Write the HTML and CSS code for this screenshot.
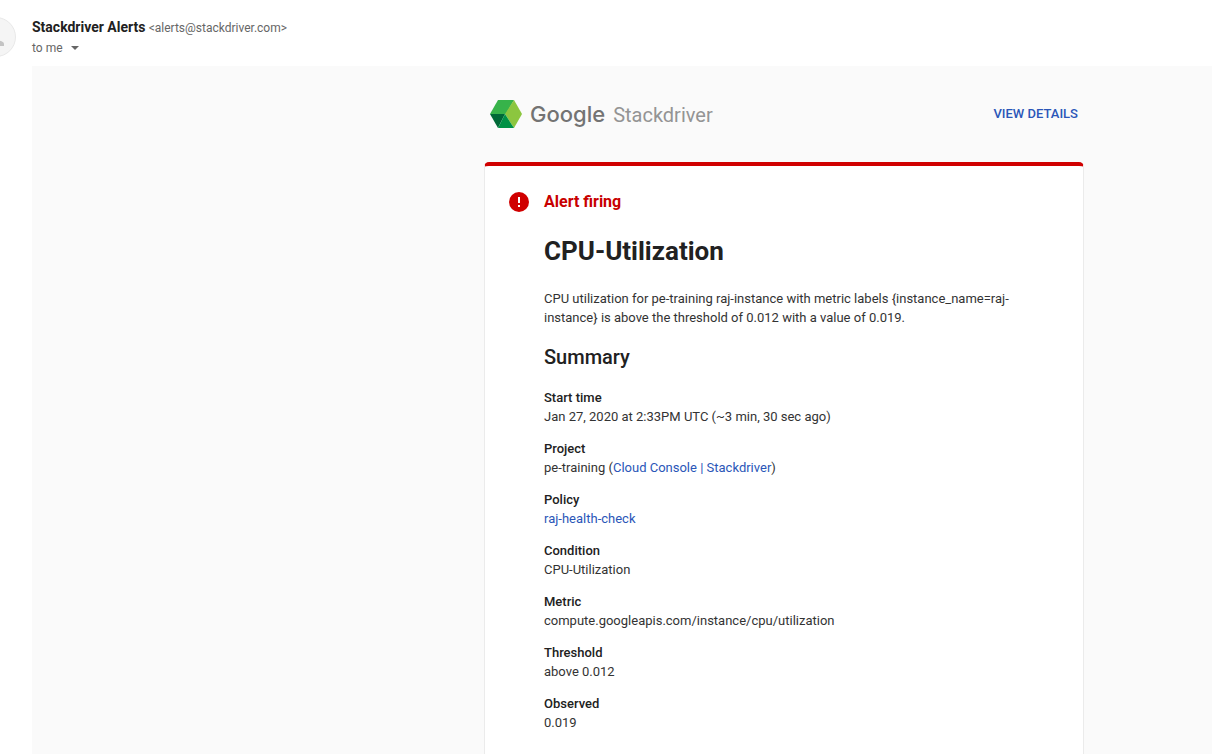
FILE: index.html
```html
<!DOCTYPE html>
<html lang="en">
<head>
<meta charset="utf-8">
<title>Stackdriver Alerts</title>
<link rel="stylesheet" href="styles.css">
</head>
<body>
<div class="mail">
  <header class="sender">
    <svg class="avatar" viewBox="0 0 40 40" aria-hidden="true">
      <circle cx="20" cy="20" r="19.500" fill="#f5f5f5" stroke="#e8e8e8"/>
      <circle cx="18" cy="15" r="5" fill="#c4c4c4"/>
      <path d="M9 29v-2c0-3 6-4 9-4s10 1 10 4v2z" fill="#c4c4c4"/>
    </svg>
    <div class="sender-lines">
      <div class="from"><span class="name">Stackdriver Alerts</span> <span class="address">&lt;alerts@stackdriver.com&gt;</span></div>
      <button class="recipient" type="button">to me
        <svg class="caret" viewBox="0 0 8 4" aria-hidden="true"><path d="M0 0h8L4 4z" fill="#666"/></svg>
      </button>
    </div>
  </header>
  <main class="message">
    <div class="letter">
      <div class="brand-bar">
        <div class="brand">
          <svg class="logo" viewBox="0 0 32 28" aria-hidden="true">
            <path d="M8 0h16l-8 14H0z" fill="#37b34a"/>
            <path d="M24 0l8 14-8 14-9-14z" fill="#8cc63f"/>
            <path d="M0 14h15L8 28z" fill="#006837"/>
            <path d="M15 14l9 14H8z" fill="#009245"/>
          </svg>
          <span class="google">Google</span>
          <span class="product">Stackdriver</span>
        </div>
        <a class="details" href="#">VIEW DETAILS</a>
      </div>
      <article class="card">
        <div class="status">
          <svg class="alert-icon" viewBox="0 0 20 20" aria-hidden="true">
            <circle cx="10" cy="10" r="10" fill="#d00000"/>
            <path d="M9 5h2v6H9zM9 13h2v2H9z" fill="#fff"/>
          </svg>
          <span>Alert firing</span>
        </div>
        <div class="content">
          <h1>CPU-Utilization</h1>
          <p>CPU utilization for pe-training raj-instance with metric labels {instance_name=raj-instance} is above the threshold of 0.012 with a value of 0.019.</p>
          <h2>Summary</h2>
          <dl class="facts">
            <div><dt>Start time</dt><dd>Jan 27, 2020 at 2:33PM UTC (~3 min, 30 sec ago)</dd></div>
            <div><dt>Project</dt><dd>pe-training (<a href="#">Cloud Console</a> <a href="#">|</a> <a href="#">Stackdriver</a>)</dd></div>
            <div><dt>Policy</dt><dd><a href="#">raj-health-check</a></dd></div>
            <div><dt>Condition</dt><dd>CPU-Utilization</dd></div>
            <div><dt>Metric</dt><dd>compute.googleapis.com/instance/cpu/utilization</dd></div>
            <div><dt>Threshold</dt><dd>above 0.012</dd></div>
            <div><dt>Observed</dt><dd>0.019</dd></div>
          </dl>
        </div>
      </article>
    </div>
  </main>
</div>
</body>
</html>
```
FILE: styles.css
```css
* { box-sizing: border-box; }

body {
  margin: 0;
  background: #fff;
  color: #212121;
  font: 13px/19px Roboto, Arial, sans-serif;
}

a { color: #2a56b8; text-decoration: none; }

.mail {
  display: flex;
  flex-direction: column;
  min-height: 100vh;
  overflow: hidden;
}

.sender {
  display: flex;
  gap: 16px;
  height: 66px;
  padding-top: 17px;
}

.avatar {
  flex: none;
  width: 40px;
  height: 40px;
  margin-left: -24px;
}

.from { line-height: 20px; }

.name {
  font-size: 14px;
  font-weight: 700;
}

.address {
  color: #666;
  font-size: 12px;
}

.recipient {
  display: flex;
  align-items: center;
  gap: 8px;
  padding: 0;
  border: 0;
  background: none;
  color: #666;
  font: 12px/20px Roboto, Arial, sans-serif;
}

.caret { width: 8px; height: 4px; }

.message {
  flex: 1;
  display: grid;
  grid-template-columns: 452fr minmax(0, 600px) 128fr;
  margin-left: 32px;
  background: #fafafa;
}

.letter {
  grid-column: 2;
  display: flex;
  flex-direction: column;
}

.brand-bar {
  display: flex;
  justify-content: space-between;
  align-items: center;
  height: 96px;
  padding: 0 6px 1px;
}

.brand {
  display: flex;
  align-items: center;
  gap: 8px;
}

.logo { width: 32px; height: 28px; }

.google {
  color: #737373;
  font: 500 22px/28px Inter, sans-serif;
}

.product {
  padding-top: 2px;
  color: #949494;
  font-size: 20px;
  line-height: 28px;
}

.details { font-weight: 500; }

.card {
  flex: 1;
  padding: 26px 24px 21px;
  border: 1px solid #ebebeb;
  border-top: 4px solid #d00000;
  border-bottom: 0;
  border-radius: 5px 5px 0 0;
  background: #fff;
}

.status {
  display: flex;
  align-items: center;
  gap: 15px;
  color: #c80000;
  font-size: 16px;
  font-weight: 700;
  line-height: 20px;
}

.alert-icon { width: 20px; height: 20px; }

.content { padding: 0 35px; }

h1 {
  margin: 23px 0 22px;
  font-size: 26px;
  font-weight: 700;
  line-height: 32px;
}

p { margin: 0; color: #333; }

h2 {
  margin: 18px 0 19px;
  font-size: 20px;
  font-weight: 500;
  line-height: 24px;
}

.facts {
  display: grid;
  gap: 13px;
  margin: 0;
}

dt { font-weight: 500; }
dd { margin: 0; color: #333; }
```
